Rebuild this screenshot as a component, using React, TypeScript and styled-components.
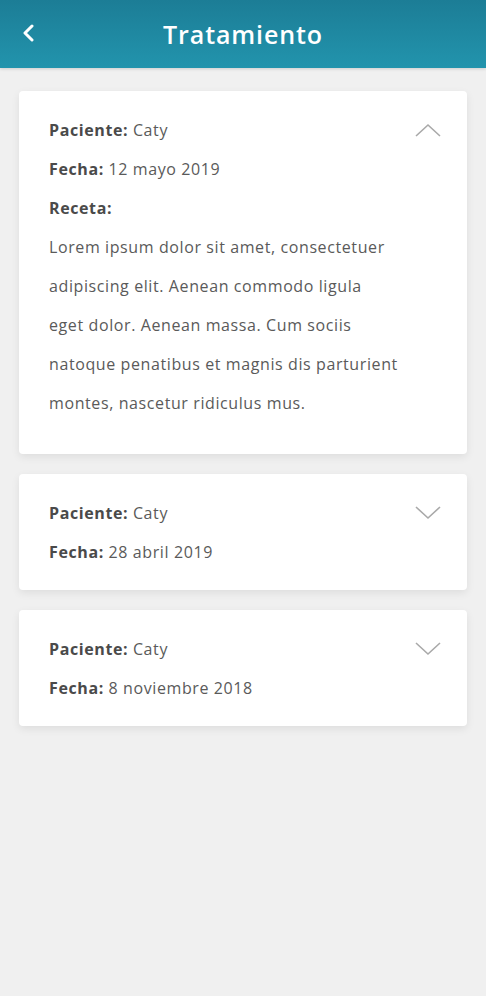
import { useState } from 'react';
import styled, { createGlobalStyle } from 'styled-components';

const GlobalStyle = createGlobalStyle`
  html, body {
    margin: 0;
    padding: 0;
    background-color: #f0f0f0;
    font-family: 'Open Sans', 'Liberation Sans', sans-serif;
  }
`;

const Page = styled.div`
  width: 486px;
  min-height: 996px;
  background-color: #f0f0f0;
`;

const Header = styled.header`
  height: 68px;
  display: flex;
  align-items: center;
  justify-content: center;
  position: relative;
  background: linear-gradient(180deg, #1c7d96 0%, #2294ad 100%);
  box-shadow: 0 1px 3px rgba(0, 0, 0, 0.15);
`;

const BackButton = styled.button`
  position: absolute;
  left: 16px;
  top: 20px;
  width: 24px;
  height: 26px;
  padding: 0;
  border: none;
  background: transparent;
  display: flex;
  align-items: center;
  justify-content: center;
`;

const Title = styled.h1`
  margin: 0;
  color: #ffffff;
  font-family: 'Open Sans', 'Liberation Sans', sans-serif;
  font-weight: 600;
  font-size: 25px;
  letter-spacing: 0.9px;
`;

const List = styled.ul`
  list-style: none;
  margin: 0;
  padding: 23px 19px;
  display: flex;
  flex-direction: column;
  gap: 20px;
`;

const Card = styled.li<{ $open: boolean }>`
  background-color: #ffffff;
  border-radius: 4px;
  box-shadow: 0 3px 8px rgba(0, 0, 0, 0.08);
  padding: 20px 30px ${(props) => (props.$open ? '31px' : '18px')} 30px;
  position: relative;
`;

const Toggle = styled.button`
  position: absolute;
  right: 24px;
  top: 30px;
  width: 30px;
  height: 20px;
  padding: 0;
  border: none;
  background: transparent;
  cursor: pointer;
`;

const Line = styled.p`
  margin: 0;
  line-height: 39px;
  font-size: 16px;
  letter-spacing: 0.6px;
  color: #5a5a5a;
`;

const Prescription = styled(Line)`
  white-space: pre-line;
`;

const Label = styled.span`
  font-weight: 700;
  color: #4a4a4a;
`;

type Treatment = {
  fecha: string;
  receta?: string;
};

const treatments: Treatment[] = [
  {
    fecha: '12 mayo 2019',
    receta: [
      'Lorem ipsum dolor sit amet, consectetuer',
      'adipiscing elit. Aenean commodo ligula',
      'eget dolor. Aenean massa. Cum sociis',
      'natoque penatibus et magnis dis parturient',
      'montes, nascetur ridiculus mus.',
    ].join('\n'),
  },
  { fecha: '28 abril 2019' },
  { fecha: '8 noviembre 2018' },
];

function Chevron({ up }: { up: boolean }) {
  return (
    <svg width="28" height="16" viewBox="0 0 28 16" fill="none">
      <path
        d={up ? 'M2 14 L14 3 L26 14' : 'M2 2 L14 13 L26 2'}
        stroke="#a9a9a9"
        strokeWidth="1.6"
      />
    </svg>
  );
}

function App() {
  const [openIndex, setOpenIndex] = useState<number>(0);

  return (
    <Page>
      <GlobalStyle />
      <Header>
        <BackButton aria-label="Volver">
          <svg width="12" height="18" viewBox="0 0 12 18" fill="none">
            <path d="M10 2 L3 9 L10 16" stroke="#ffffff" strokeWidth="3" strokeLinecap="round" strokeLinejoin="round" />
          </svg>
        </BackButton>
        <Title>Tratamiento</Title>
      </Header>
      <List>
        {treatments.map((t, index) => {
          const open = openIndex === index && !!t.receta;
          return (
            <Card key={index} $open={open}>
              <Toggle onClick={() => setOpenIndex(open ? -1 : index)}>
                <Chevron up={open} />
              </Toggle>
              <Line>
                <Label>Paciente:</Label> Caty
              </Line>
              <Line>
                <Label>Fecha:</Label> {t.fecha}
              </Line>
              {open && (
                <>
                  <Line>
                    <Label>Receta:</Label>
                  </Line>
                  <Prescription>{t.receta}</Prescription>
                </>
              )}
            </Card>
          );
        })}
      </List>
    </Page>
  );
}

export default App;
